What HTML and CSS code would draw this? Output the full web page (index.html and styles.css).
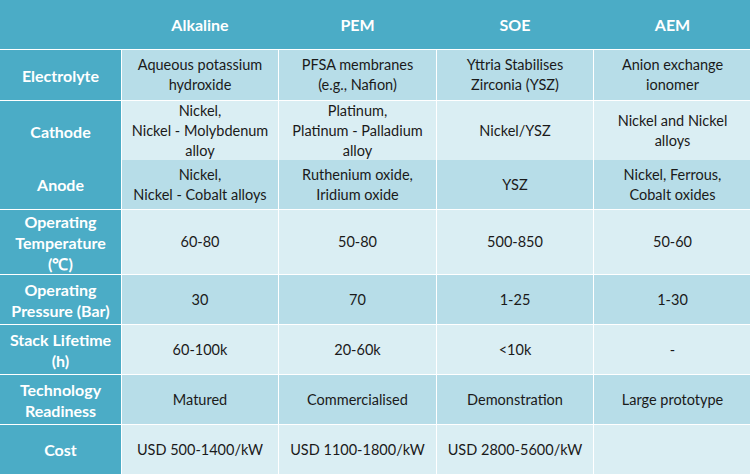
FILE: index.html
```html
<!DOCTYPE html>
<html lang="en">
<head>
<meta charset="utf-8">
<title>Electrolyser technologies</title>
<link rel="stylesheet" href="styles.css">
</head>
<body>
<div class="table">
  <div class="row head">
    <div class="cell"></div>
    <div class="cell">Alkaline</div>
    <div class="cell">PEM</div>
    <div class="cell">SOE</div>
    <div class="cell">AEM</div>
  </div>
  <div class="row dark h50">
    <div class="cell label">Electrolyte</div>
    <div class="cell">Aqueous potassium<br>hydroxide</div>
    <div class="cell">PFSA membranes<br>(e.g., Nafion)</div>
    <div class="cell">Yttria Stabilises<br>Zirconia (YSZ)</div>
    <div class="cell">Anion exchange<br>ionomer</div>
  </div>
  <div class="row light h58">
    <div class="cell label">Cathode</div>
    <div class="cell">Nickel,<br>Nickel - Molybdenum<br>alloy</div>
    <div class="cell">Platinum,<br>Platinum - Palladium<br>alloy</div>
    <div class="cell">Nickel/YSZ</div>
    <div class="cell">Nickel and Nickel<br>alloys</div>
  </div>
  <div class="row dark h49">
    <div class="cell label">Anode</div>
    <div class="cell">Nickel,<br>Nickel - Cobalt alloys</div>
    <div class="cell">Ruthenium oxide,<br>Iridium oxide</div>
    <div class="cell">YSZ</div>
    <div class="cell">Nickel, Ferrous,<br>Cobalt oxides</div>
  </div>
  <div class="row light h64">
    <div class="cell label">Operating<br>Temperature<br>(℃)</div>
    <div class="cell">60-80</div>
    <div class="cell">50-80</div>
    <div class="cell">500-850</div>
    <div class="cell">50-60</div>
  </div>
  <div class="row dark h49">
    <div class="cell label">Operating<br>Pressure (Bar)</div>
    <div class="cell">30</div>
    <div class="cell">70</div>
    <div class="cell">1-25</div>
    <div class="cell">1-30</div>
  </div>
  <div class="row light h49">
    <div class="cell label">Stack Lifetime<br>(h)</div>
    <div class="cell">60-100k</div>
    <div class="cell">20-60k</div>
    <div class="cell">&lt;10k</div>
    <div class="cell">-</div>
  </div>
  <div class="row dark h49">
    <div class="cell label">Technology<br>Readiness</div>
    <div class="cell">Matured</div>
    <div class="cell">Commercialised</div>
    <div class="cell">Demonstration</div>
    <div class="cell">Large prototype</div>
  </div>
  <div class="row light h49">
    <div class="cell label">Cost</div>
    <div class="cell">USD 500-1400/kW</div>
    <div class="cell">USD 1100-1800/kW</div>
    <div class="cell">USD 2800-5600/kW</div>
    <div class="cell"></div>
  </div>
</div>
</body>
</html>
```

FILE: styles.css
```css
html, body {
  margin: 0;
  padding: 0;
  background: #ffffff;
}
.table {
  width: 750px;
  height: 474px;
  display: flex;
  flex-direction: column;
  gap: 1px;
  background: #ffffff;
  font-family: Lato, "Liberation Sans", sans-serif;
  font-size: 14.5px;
  line-height: 20px;
  color: #1a1a1a;
}
.row {
  display: grid;
  grid-template-columns: 121px 156px 157px 156px 157px;
  column-gap: 1px;
  background: #ffffff;
}
.cell {
  display: flex;
  align-items: center;
  justify-content: center;
  text-align: center;
}
.head {
  height: 49px;
  background: #4bacc6;
}
.head .cell {
  color: #ffffff;
  font-weight: 700;
  font-size: 16px;
}
.label {
  background: #4bacc6;
  color: #ffffff;
  font-weight: 700;
  font-size: 16px;
  line-height: 21px;
}
.dark .cell:not(.label) {
  background: #b7dde8;
}
.light .cell:not(.label) {
  background: #daeef3;
}
.h49 { height: 49px; }
.h50 { height: 50px; }
.h58 { height: 58px; }
.h64 { height: 64px; }
```
